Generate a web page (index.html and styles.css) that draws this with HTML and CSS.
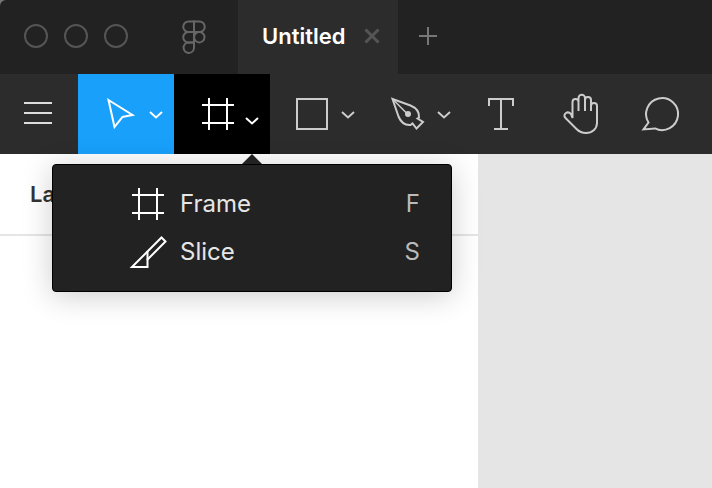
FILE: index.html
```html
<!DOCTYPE html>
<html lang="en">

<head>
    <meta charset="utf-8">
    <title>Untitled</title>
    <meta name="viewport" content="width=device-width, initial-scale=1.0">
    <link rel="stylesheet" href="styles.css">
</head>

<body>
    <!-- Title bar -->
    <header class="titlebar">
        <div class="window-buttons">
            <span class="window-button"></span>
            <span class="window-button"></span>
            <span class="window-button"></span>
        </div>
        <svg class="logo" width="24" height="34" viewBox="182 20 24 34" fill="none" stroke="#666" stroke-width="2">
            <path d="M194 21.5h-5.5a5.2 5.2 0 0 0 0 10.500h5.500z" />
            <path d="M194 21.500h5.500a5.200 5.200 0 0 1 0 10.500h-5.500z" />
            <path d="M194 32h-5.500a5.200 5.200 0 0 0 0 10.500h5.500z" />
            <circle cx="199.300" cy="37.200" r="5.200" />
            <path d="M194 42.500h-5.500a5.200 5.200 0 1 0 5.500 5.200z" />
        </svg>
        <div class="tab">
            <span class="tab-name">Untitled</span>
            <svg class="tab-close" width="16" height="16" viewBox="0 0 16 16" stroke="#555" stroke-width="3">
                <path d="M1.500 1.500l13 13M14.500 1.500l-13 13" />
            </svg>
        </div>
        <svg class="tab-add" width="18" height="18" viewBox="0 0 18 18" stroke="#777" stroke-width="2">
            <path d="M9 0v18M0 9h18" />
        </svg>
    </header>

    <!-- Toolbar -->
    <nav class="toolbar">
        <button class="tool tool-menu">
            <svg width="78" height="80" viewBox="0 74 78 80" stroke="#ddd" stroke-width="2">
                <path d="M24 103h28M24 113h28M24 123h28" />
            </svg>
        </button>
        <button class="tool tool-wide tool-blue">
            <svg width="96" height="80" viewBox="78 74 96 80" fill="none" stroke="#fff" stroke-width="2">
                <path d="M108.500 100l24 15-10 2-8 10z" />
                <path d="M150 112l6 5.500 6-5.500" />
            </svg>
        </button>
        <button class="tool tool-wide tool-black">
            <svg width="96" height="80" viewBox="174 74 96 80" fill="none" stroke="#fff" stroke-width="2">
                <path d="M209 98v32M227 98v32M202 105h32M202 123h32" />
                <path d="M246 118l6 5.500 6-5.500" />
            </svg>
        </button>
        <button class="tool tool-wide">
            <svg width="96" height="80" viewBox="270 74 96 80" fill="none" stroke="#ccc" stroke-width="2">
                <rect x="297" y="99" width="30" height="30" />
                <path d="M342 112l6 5.500 6-5.500" />
            </svg>
        </button>
        <button class="tool tool-wide">
            <svg width="96" height="80" viewBox="366 74 96 80" fill="none" stroke="#ccc" stroke-width="2">
                <path d="M392.500 99l18 6.500c6 2.500 9 6 8.500 12l-1.500 1 5.500 3.500-6.500 6.500-4-5-2 1.500c-6 .5-9.500-2.500-12-8.500z" />
                <path d="M392.500 99l15 15" stroke-width="1.500" />
                <circle cx="408" cy="114" r="3" fill="#ccc" stroke="none" />
                <path d="M438 112l6 5.500 6-5.500" />
            </svg>
        </button>
        <button class="tool">
            <svg width="80" height="80" viewBox="462 74 80 80" fill="none" stroke="#ccc" stroke-width="2">
                <path d="M489 106v-7h24v7M501 99v30M494 129h14" />
            </svg>
        </button>
        <button class="tool">
            <svg width="80" height="80" viewBox="542 74 80 80" fill="none" stroke="#ccc" stroke-width="2">
                <path d="M572.500 118v-16a3 3 0 0 1 6 0v-4a3.200 3.200 0 0 1 6.500 0v2a3 3 0 0 1 6 0v6a3 3 0 0 1 6 0v17c0 6-5 10-11 10-4 0-7-1.500-9.500-4l-11-11c-2-2-1-4 .5-5 1.500-1 3.500-.5 5 1z" />
                <path d="M578.500 102v9M585 98v13M591 100v11" />
            </svg>
        </button>
        <button class="tool">
            <svg width="80" height="80" viewBox="622 74 80 80" fill="none" stroke="#ccc" stroke-width="2">
                <path d="M648.500 122.500a16 16 0 1 1 6.500 5.900l-11.500 1z" />
            </svg>
        </button>
    </nav>

    <!-- Panel and canvas -->
    <main class="workspace">
        <section class="panel">
            <h2 class="panel-title">Layers</h2>
        </section>
        <section class="canvas"></section>
    </main>

    <!-- Frame tool menu -->
    <div class="popup">
        <div class="popup-row">
            <svg class="popup-icon" width="40" height="36" viewBox="128 186 40 36" fill="none" stroke="#fff" stroke-width="2">
                <path d="M139 188v32M157 188v32M132 195h32M132 213h32" />
            </svg>
            <span class="popup-label">Frame</span>
            <span class="popup-key">F</span>
        </div>
        <div class="popup-row">
            <svg class="popup-icon" width="40" height="36" viewBox="128 234 40 36" fill="none" stroke="#fff" stroke-width="2">
                <path d="M132 267l29.500-29.500 4 4-18 18v7.500z" />
                <path d="M147.500 251v9" />
            </svg>
            <span class="popup-label">Slice</span>
            <span class="popup-key">S</span>
        </div>
    </div>
</body>

</html>
```

FILE: styles.css
```css
* {
    margin: 0;
    padding: 0;
    box-sizing: border-box;
}

body {
    width: 712px;
    height: 488px;
    overflow: hidden;
    position: relative;
    font-family: Inter, "Liberation Sans", sans-serif;
    background-color: #777;

    display: flex;
    flex-direction: column;
}

/* Title bar
============================================================*/

.titlebar {
    height: 74px;
    background-color: #222;
    border-top-left-radius: 6px;
    display: flex;
    align-items: center;
}

.window-buttons {
    display: flex;
    gap: 16px;
    padding-left: 24px;
    margin-bottom: 2px;
}

.window-button {
    width: 24px;
    height: 24px;
    border: 2px solid #555;
    border-radius: 50%;
}

.logo {
    margin-left: 54px;
}

.tab {
    width: 160px;
    height: 100%;
    margin-left: 32px;
    padding: 0 0 2px 24px;
    background-color: #2c2c2c;
    display: flex;
    align-items: center;
    gap: 19px;
}

.tab-name {
    font-size: 22px;
    font-weight: 600;
    color: #fff;
}

.tab-add {
    margin: 0 0 2px 21px;
}

/* Toolbar
============================================================*/

.toolbar {
    height: 80px;
    background-color: #2c2c2c;
    display: flex;
}

.tool {
    border: none;
    background: none;
    display: block;
    height: 80px;
}

.tool svg {
    display: block;
}

.tool-blue {
    background-color: #18a0fb;
}

.tool-black {
    background-color: #000;
}

/* Panel and canvas
============================================================*/

.workspace {
    flex-grow: 1;
    display: flex;
    background-color: #e5e5e5;
}

.panel {
    width: 478px;
    background-color: #fff;
}

.panel-title {
    height: 82px;
    padding: 27px 30px 0;
    font-size: 22px;
    line-height: 26px;
    font-weight: 600;
    color: #333;
    border-bottom: 2px solid #e5e5e5;
}

/* Frame tool menu
============================================================*/

.popup {
    position: absolute;
    left: 52px;
    top: 164px;
    width: 400px;
    height: 128px;
    padding: 15px 0;
    background-color: #222;
    border: 1px solid #000;
    border-radius: 4px;
    box-shadow: 0 4px 30px rgba(0, 0, 0, 0.2);
}

.popup::before {
    content: "";
    position: absolute;
    left: 189px;
    top: -11px;
    border-left: 10px solid transparent;
    border-right: 10px solid transparent;
    border-bottom: 10px solid #222;
}

.popup-row {
    height: 48px;
    padding: 0 31px 0 75px;
    display: flex;
    align-items: center;
}

.popup-icon {
    margin-right: 12px;
}

.popup-label {
    flex-grow: 1;
    padding-bottom: 2px;
    font-size: 24px;
    color: #e6e6e6;
}

.popup-key {
    padding-bottom: 2px;
    font-size: 24px;
    color: #bbb;
}
```
